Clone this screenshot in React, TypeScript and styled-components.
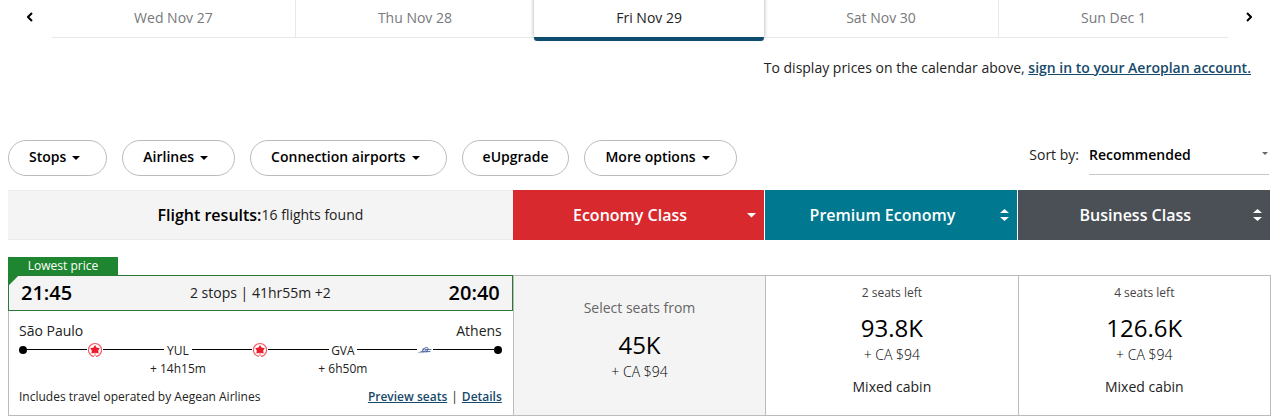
import React from "react";
import styled, { createGlobalStyle } from "styled-components";

const GlobalStyle = createGlobalStyle`
  *, *::before, *::after { box-sizing: border-box; }
  body {
    margin: 0;
    background: #fff;
    color: #222;
    font-family: "Open Sans", "Noto Sans", sans-serif;
    font-size: 14px;
    line-height: 20px;
  }
  button, select { font: inherit; color: inherit; }
  button { cursor: pointer; }
`;

const Page = styled.main`
  padding: 0 11px 0 8px;
`;

/* Calendar strip */

const Calendar = styled.nav`
  display: flex;
  align-items: flex-start;
`;

const ArrowButton = styled.button<{ $width: number }>`
  flex: 0 0 ${(p) => p.$width}px;
  height: 34px;
  padding: 0;
  border: 0;
  background: none;
  color: #000;
`;

const Days = styled.div`
  display: flex;
  flex: 1;
  align-items: flex-start;
`;

const Day = styled.button<{ $selected?: boolean; $divider?: boolean }>`
  position: relative;
  z-index: ${(p) => (p.$selected ? 1 : 0)};
  flex: 1 1 auto;
  height: ${(p) => (p.$selected ? 41 : 38)}px;
  padding: 0 0 ${(p) => (p.$selected ? 1 : 2)}px;
  border: 0 solid #e8e8e8;
  border-left-width: ${(p) => (p.$divider ? 1 : 0)}px;
  border-bottom: ${(p) => (p.$selected ? "4px solid #0f4d70" : "1px solid #e8e8e8")};
  border-radius: ${(p) => (p.$selected ? "0 0 3px 3px" : "0")};
  box-shadow: ${(p) => (p.$selected ? "0 -3px 4px rgba(0, 0, 0, 0.35)" : "none")};
  background: #fff;
  color: ${(p) => (p.$selected ? "#222" : "#77797c")};
`;

const SignInNote = styled.p`
  margin: 0;
  padding: 17px 19px 0 0;
  text-align: right;
`;

const TextLink = styled.a`
  color: #164a6b;
  font-weight: 600;
  text-decoration: underline;
`;

/* Filters */

const Toolbar = styled.div`
  display: flex;
  justify-content: space-between;
  align-items: flex-start;
  margin-top: 62px;
`;

const Filters = styled.div`
  display: flex;
  gap: 15px;
`;

const Chip = styled.button`
  display: flex;
  align-items: center;
  height: 36px;
  padding: 0 20px 2px;
  border: 1px solid #bbb;
  border-radius: 18px;
  background: #fff;
  color: #000;
  font-weight: 600;
`;

const Sort = styled.div`
  display: flex;
  align-items: flex-start;
  gap: 10px;
  padding-right: 1px;

  label { line-height: 30px; }
`;

const SelectBox = styled.div`
  display: flex;
  align-items: center;
  width: 180px;
  height: 35px;
  padding-bottom: 4px;
  border-bottom: 1px solid #c8c8c8;
  color: #666;
`;

const Select = styled.select`
  flex: 1;
  height: 30px;
  padding: 0;
  border: 0;
  appearance: none;
  background: transparent;
  color: #000;
  font-weight: 600;
`;

/* Results */

const Columns = styled.div`
  display: grid;
  grid-template-columns: 2fr 1fr 1fr 1fr;
`;

const HeaderRow = styled(Columns)`
  height: 50px;
  margin-top: 14px;
`;

const Summary = styled.div`
  display: flex;
  align-items: center;
  justify-content: center;
  border: solid #ececec;
  border-width: 1px 0;
  background: #f4f4f4;
`;

const SummaryTitle = styled.h2`
  margin: 0;
  color: #000;
  font-size: 16px;
  font-weight: 600;
`;

const CabinHeader = styled.button<{ $color: string }>`
  display: grid;
  grid-template-columns: 1fr 17px;
  align-items: center;
  padding: 0;
  border: 0;
  border-right: 1px solid #fff;
  background: ${(p) => p.$color};
  color: #fff;
  font-size: 16px;
  font-weight: 600;

  &:last-child { border-right: 0; }
`;

const Result = styled.article`
  margin-top: 17px;
`;

const Ribbon = styled.div`
  width: 110px;
  height: 18px;
  background: #1e8630;
  color: #fff;
  font-size: 12px;
  line-height: 18px;
  text-align: center;
`;

const ResultRow = styled(Columns)`
  min-height: 141px;
  margin-right: -1px;
  border-right: 1px solid #bbb;
`;

const Flight = styled.section`
  display: flex;
  flex-direction: column;
  border-left: 1px solid #bbb;
  border-bottom: 1px solid #bbb;
`;

const Times = styled.div`
  display: flex;
  align-items: center;
  justify-content: space-between;
  height: 36px;
  margin-left: -1px;
  padding: 0 12px;
  border: 1px solid #2a7a36;
  background: linear-gradient(135deg, #1e8630 6px, #f4f4f4 7px);
`;

const Time = styled.strong`
  color: #000;
  font-size: 20px;
  font-weight: 600;
`;

const FlightBody = styled.div`
  padding: 10px 11px 8px 10px;
`;

const Spread = styled.div`
  display: flex;
  justify-content: space-between;
`;

const Footer = styled(Spread)`
  margin-top: 10px;
  font-size: 12px;
`;

const Separator = styled.span`
  margin: 0 4px;
`;

const Route = styled.div`
  display: flex;
  align-items: flex-start;
  height: 36px;
`;

const Dot = styled.span`
  flex: none;
  width: 8px;
  height: 8px;
  margin-top: 5px;
  border-radius: 50%;
  background: #000;
`;

const Leg = styled.span`
  flex: 1;
  height: 1px;
  margin-top: 8px;
  background: #000;
`;

const Carrier = styled.svg`
  flex: none;
  width: 16px;
  height: 16px;
  margin-top: 1px;
`;

const Stop = styled.div`
  display: flex;
  flex-direction: column;
  align-items: center;
  width: 28px;
  padding-top: 1px;
  font-size: 12px;
  line-height: 18px;
  white-space: nowrap;
`;

const Fare = styled.button<{ $best?: boolean }>`
  display: flex;
  flex-direction: column;
  align-items: center;
  padding: ${(p) => (p.$best ? 22 : 7)}px 0 0;
  border: solid #bbb;
  border-width: 1px 0 1px 1px;
  background: ${(p) => (p.$best ? "#f4f4f4" : "#fff")};
`;

const FareLead = styled.span`
  color: #666;
`;

const SeatsLeft = styled.span`
  color: #444;
  font-size: 12px;
`;

const Points = styled.span<{ $gap: number }>`
  margin-top: ${(p) => p.$gap}px;
  color: #000;
  font-size: 24px;
  line-height: 32px;
`;

const Cash = styled.span`
  margin-top: 1px;
  font-weight: 300;
  color: #000;
`;

const CabinNote = styled.span`
  margin-top: 12px;
`;

const Caret = () => (
  <svg width="20" height="6" viewBox="0 0 20 6" fill="currentColor" aria-hidden="true">
    <path d="M6 2h8L10 6z" />
  </svg>
);

const SmallCaret = () => (
  <svg width="8" height="8" viewBox="0 0 8 8" fill="currentColor" aria-hidden="true">
    <path d="M1 1h6L4 4z" />
  </svg>
);

const SortMark = ({ both }: { both?: boolean }) => (
  <svg width="9" height="14" viewBox="0 0 9 14" fill="currentColor" aria-hidden="true">
    {both ? <path d="M0 5h9L4.500 1zM0 9h9L4.500 13z" /> : <path d="M0 5h9L4.500 9.500z" />}
  </svg>
);

const Chevron = ({ right }: { right?: boolean }) => (
  <svg width="6" height="10" viewBox="0 0 6 10" fill="none" stroke="currentColor" strokeWidth="2" aria-hidden="true">
    <path d={right ? "M1 1l4 4-4 4" : "M5 1L1 5l4 4"} />
  </svg>
);

const MapleLogo = () => (
  <Carrier viewBox="0 0 16 16" role="img" aria-label="Air Canada">
    <path d="M9 14.400A6.500 6.500 0 1 0 7 14.400" fill="none" stroke="#f0606a" strokeWidth="1.200" />
    <path d="M8 3l1.500 2.600 3.300.6-1.600 2.300.4 3L8 10.800l-3.600.7.4-3-1.600-2.300 3.300-.6z" fill="#ec1c2c" />
    <path d="M8 10v4" stroke="#ec1c2c" strokeWidth=".7" />
  </Carrier>
);

const AegeanLogo = () => (
  <Carrier viewBox="0 0 16 16" role="img" aria-label="Aegean Airlines">
    <g fill="none" stroke="#3f5a94" strokeLinecap="round">
      <path d="M3 10.200c1.500-.2 2.200-.8 3-2C7 6.500 8 5.600 9.500 5.600c1.500 0 2 1 1.200 2L9.300 9.800" />
      <path d="M5.500 7.200C7 6.200 8.500 6.800 8.500 8S6.500 10.200 5 9.800h5" strokeWidth=".9" />
      <path d="M9 7.600h5M10 9.600h3" strokeWidth=".9" />
    </g>
    <path d="M1 10.600h6" stroke="#a9b6d0" />
  </Carrier>
);

const days = ["Wed Nov 27", "Thu Nov 28", "Fri Nov 29", "Sat Nov 30", "Sun Dec 1"];
const selectedDay = 2;

const filters = [
  { label: "Stops", menu: true },
  { label: "Airlines", menu: true },
  { label: "Connection airports", menu: true },
  { label: "eUpgrade", menu: false },
  { label: "More options", menu: true },
];

const cabins = [
  { label: "Economy Class", color: "#d8292f", both: false },
  { label: "Premium Economy", color: "#00788f", both: true },
  { label: "Business Class", color: "#4b4f56", both: true },
];

const fares = [
  { seats: "2 seats left", points: "93.8K" },
  { seats: "4 seats left", points: "126.6K" },
];

export default function App() {
  return (
    <Page>
      <GlobalStyle />
      <Calendar aria-label="Departure date">
        <ArrowButton $width={44} aria-label="Previous day"><Chevron /></ArrowButton>
        <Days>
          {days.map((day, i) => (
            <Day key={day} $selected={i === selectedDay} $divider={i === 1 || i === 4} aria-pressed={i === selectedDay}>
              {day}
            </Day>
          ))}
        </Days>
        <ArrowButton $width={42} aria-label="Next day"><Chevron right /></ArrowButton>
      </Calendar>
      <SignInNote>
        To display prices on the calendar above, <TextLink href="#sign-in">sign in to your Aeroplan account.</TextLink>
      </SignInNote>

      <Toolbar>
        <Filters>
          {filters.map((f) => (
            <Chip key={f.label}>{f.label}{f.menu && <Caret />}</Chip>
          ))}
        </Filters>
        <Sort>
          <label htmlFor="sort">Sort by:</label>
          <SelectBox>
            <Select id="sort" defaultValue="Recommended">
              <option>Recommended</option>
            </Select>
            <SmallCaret />
          </SelectBox>
        </Sort>
      </Toolbar>

      <HeaderRow>
        <Summary><SummaryTitle>Flight results:</SummaryTitle><span>16 flights found</span></Summary>
        {cabins.map((c) => (
          <CabinHeader key={c.label} $color={c.color}>
            <span>{c.label}</span>
            <SortMark both={c.both} />
          </CabinHeader>
        ))}
      </HeaderRow>

      <Result>
        <Ribbon>Lowest price</Ribbon>
        <ResultRow>
          <Flight>
            <Times>
              <Time>21:45</Time>
              <span>2 stops | 41hr55m +2</span>
              <Time>20:40</Time>
            </Times>
            <FlightBody>
              <Spread><span>São Paulo</span><span>Athens</span></Spread>
              <Route>
                <Dot /><Leg /><MapleLogo /><Leg />
                <Stop><span>YUL</span><span>+ 14h15m</span></Stop>
                <Leg /><MapleLogo /><Leg />
                <Stop><span>GVA</span><span>+ 6h50m</span></Stop>
                <Leg /><AegeanLogo /><Leg /><Dot />
              </Route>
              <Footer>
                <span>Includes travel operated by Aegean Airlines</span>
                <span>
                  <TextLink href="#seats">Preview seats</TextLink>
                  <Separator>|</Separator>
                  <TextLink href="#details">Details</TextLink>
                </span>
              </Footer>
            </FlightBody>
          </Flight>
          <Fare $best>
            <FareLead>Select seats from</FareLead>
            <Points $gap={11}>45K</Points>
            <Cash>+ CA $94</Cash>
          </Fare>
          {fares.map((f) => (
            <Fare key={f.points}>
              <SeatsLeft>{f.seats}</SeatsLeft>
              <Points $gap={9}>{f.points}</Points>
              <Cash>+ CA $94</Cash>
              <CabinNote>Mixed cabin</CabinNote>
            </Fare>
          ))}
        </ResultRow>
      </Result>
    </Page>
  );
}
